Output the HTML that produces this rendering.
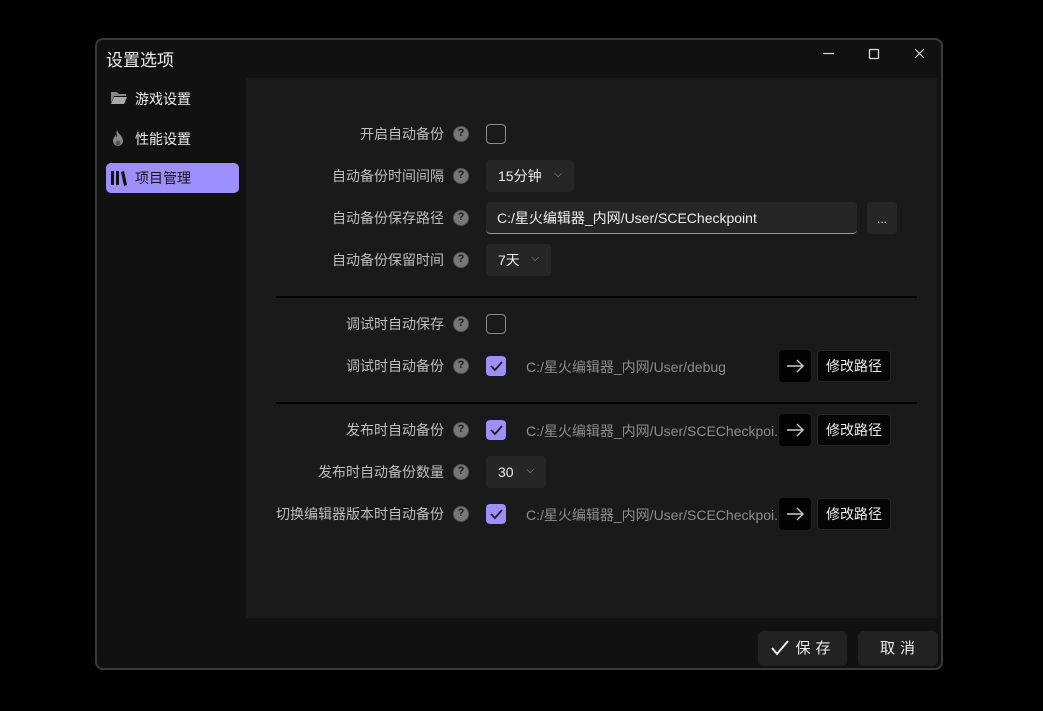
<!DOCTYPE html>
<html><head><meta charset="utf-8"><style>
*{margin:0;padding:0;box-sizing:border-box}
body{width:1043px;height:711px;background:#000;position:relative;font-family:"Liberation Sans","Noto Sans CJK SC",sans-serif;overflow:hidden}
.a{position:absolute}
.win{left:95px;top:38px;width:848px;height:632px;background:#111;border:2px solid #3a3a3a;border-radius:8px}
.title{left:106px;top:46px;color:#f0f0f0;font-size:17px}
.nav{left:106px;width:133px;height:30px;border-radius:5px;color:#eee;font-size:14px;line-height:30px;padding-left:29px}
.panel{left:246px;top:78px;width:691px;height:540px;background:#1a1a1a}
.lbl{right:599px;color:#bdbdbd;font-size:14px;text-align:right;white-space:nowrap;line-height:20px}
.q{left:453px;width:16px;height:16px;border-radius:50%;background:#777;border:1.5px solid #555;color:#1a1a1a;font-size:11px;font-weight:bold;text-align:center;line-height:13px}
.cb{left:486px;width:20px;height:20px;border:1.5px solid #8a8a8a;border-radius:4px}
.cc{left:486px;width:20px;height:20px;border-radius:4px;background:#9d8fff}
.dd{left:486px;height:32px;background:#262626;border-radius:4px;color:#eee;font-size:14px;line-height:32px;padding-left:12px}
.dd span{position:absolute;right:12px;top:-1px;font-size:10px;color:#aaa}
.path{left:526px;width:252px;overflow:hidden;color:#8c8c8c;font-size:14px;line-height:20px;white-space:nowrap}
.ar{left:779px;width:32px;height:32px;background:#020202;border-radius:4px}
.mb{left:817px;width:74px;height:32px;background:#050505;border:1px solid #262626;border-radius:4px;color:#eee;font-size:14px;line-height:30px;text-align:center}
.hr{left:276px;width:641px;height:2px;background:#000}
.fb{top:631px;height:35px;background:#222;border-radius:5px;color:#eee;font-size:15px;line-height:35px;text-align:center;letter-spacing:5px}
</style></head><body>
<div class="a win"></div>
<div class="a title">设置选项</div>
<svg class="a" style="left:822px;top:46px" width="110" height="16"><line x1="1" y1="7.5" x2="12" y2="7.5" stroke="#ddd" stroke-width="1.2"/><rect x="47.5" y="3.5" width="9" height="9" fill="none" stroke="#ddd" stroke-width="1.3" rx="1"/><path d="M93 3l9 9M102 3l-9 9" stroke="#ddd" stroke-width="1.2"/></svg>
<div class="a panel"></div>
<div class="a nav" style="top:84px">游戏设置</div>
<svg class="a" style="left:111px;top:91px" width="16" height="14"><path d="M0 1h6l2 2h7v2H3L0 12z" fill="#888"/><path d="M3 6h13l-3 7H0z" fill="#aaa"/></svg>
<div class="a nav" style="top:124px">性能设置</div>
<svg class="a" style="left:110px;top:129px" width="16" height="20"><path d="M7 1c1 4 6 6 6 11a5 5 0 0 1-10 0c0-3 2-4 2-6 1 1 2 2 2 3 0-3-1-5 0-8z" fill="#888"/><circle cx="8" cy="14" r="2.5" fill="#555"/></svg>
<div class="a nav" style="top:163px;background:#9d8fff;color:#111">项目管理</div>
<svg class="a" style="left:110px;top:170px" width="18" height="16"><rect x="1" y="1" width="3" height="14" fill="#111"/><rect x="6" y="1" width="3" height="14" fill="#111"/><path d="M11 2l3-1 3 14-3 1z" fill="#111"/></svg>

<div class="a lbl" style="top:124px">开启自动备份</div><div class="a q" style="top:126px">?</div>
<div class="a cb" style="top:124px"></div>
<div class="a lbl" style="top:166px">自动备份时间间隔</div><div class="a q" style="top:168px">?</div>
<div class="a dd" style="top:160px;width:88px">15分钟<span>⌵</span></div>
<div class="a lbl" style="top:208px">自动备份保存路径</div><div class="a q" style="top:210px">?</div>
<div class="a" style="left:486px;top:202px;width:371px;height:32px;background:#262626;border-radius:4px;border-bottom:1px solid #999;color:#eee;font-size:14px;line-height:32px;padding-left:11px">C:/星火编辑器_内网/User/SCECheckpoint</div>
<div class="a" style="left:867px;top:202px;width:30px;height:32px;background:#262626;border-radius:4px;color:#ddd;font-size:12px;text-align:center;line-height:34px">...</div>
<div class="a lbl" style="top:250px">自动备份保留时间</div><div class="a q" style="top:252px">?</div>
<div class="a dd" style="top:244px;width:65px">7天<span>⌵</span></div>
<div class="a hr" style="top:296px"></div>

<div class="a lbl" style="top:314px">调试时自动保存</div><div class="a q" style="top:316px">?</div>
<div class="a cb" style="top:314px"></div>
<div class="a lbl" style="top:356px">调试时自动备份</div><div class="a q" style="top:358px">?</div>
<div class="a cc" style="top:356px"></div>
<div class="a path" style="top:357px">C:/星火编辑器_内网/User/debug</div>
<div class="a ar" style="top:350px"></div><div class="a mb" style="top:350px">修改路径</div>
<div class="a hr" style="top:402px"></div>

<div class="a lbl" style="top:420px">发布时自动备份</div><div class="a q" style="top:422px">?</div>
<div class="a cc" style="top:420px"></div>
<div class="a path" style="top:421px">C:/星火编辑器_内网/User/SCECheckpoi...</div>
<div class="a ar" style="top:414px"></div><div class="a mb" style="top:414px">修改路径</div>
<div class="a lbl" style="top:462px">发布时自动备份数量</div><div class="a q" style="top:464px">?</div>
<div class="a dd" style="top:456px;width:60px">30<span>⌵</span></div>
<div class="a lbl" style="top:504px">切换编辑器版本时自动备份</div><div class="a q" style="top:506px">?</div>
<div class="a cc" style="top:504px"></div>
<div class="a path" style="top:505px">C:/星火编辑器_内网/User/SCECheckpoi...</div>
<div class="a ar" style="top:498px"></div><div class="a mb" style="top:498px">修改路径</div>

<svg class="a" style="left:486px;top:0" width="420" height="711">
<g fill="none" stroke="#222" stroke-width="1.8"><path d="M5 366l4 4 7-8M5 430l4 4 7-8M5 514l4 4 7-8"/></g>
<g fill="none" stroke="#ccc" stroke-width="1.4"><path d="M301 366h16M311 360l6 6-6 6M301 430h16M311 424l6 6-6 6M301 514h16M311 508l6 6-6 6"/></g>
</svg>

<div class="a fb" style="left:758px;width:89px;padding-left:26px">保存</div>
<svg class="a" style="left:770px;top:639px" width="20" height="18"><path d="M2 9l5 6L18 2" fill="none" stroke="#eee" stroke-width="2"/></svg>
<div class="a fb" style="left:858px;width:80px;padding-left:4px">取消</div>
</body></html>
